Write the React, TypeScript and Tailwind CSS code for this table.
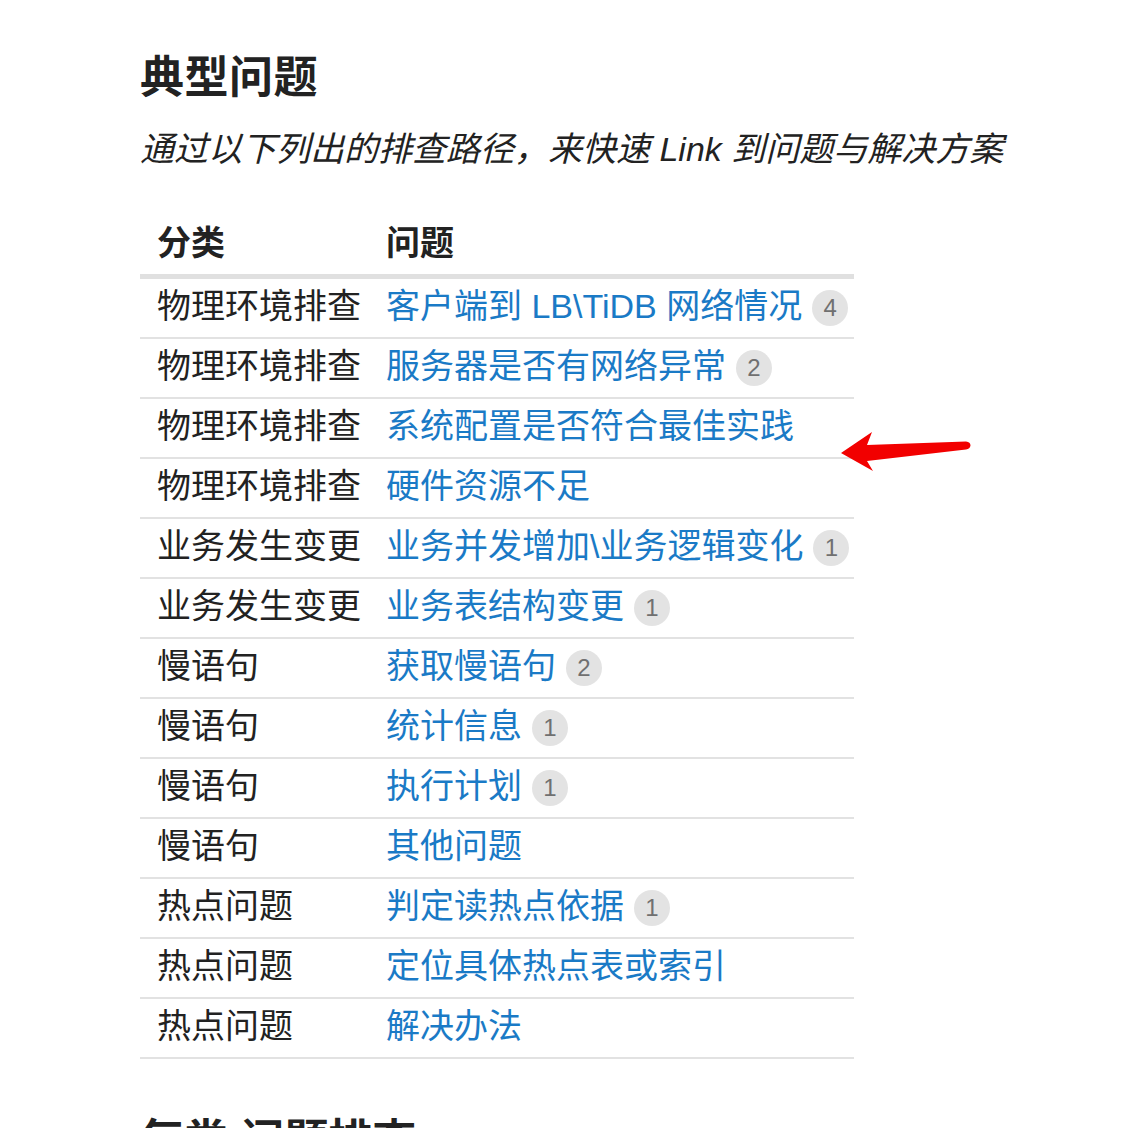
import React from "react";

type Row = { cat: string; q: string; n?: number };

const rows: Row[] = [
  { cat: "物理环境排查", q: "客户端到 LB\\TiDB 网络情况", n: 4 },
  { cat: "物理环境排查", q: "服务器是否有网络异常", n: 2 },
  { cat: "物理环境排查", q: "系统配置是否符合最佳实践" },
  { cat: "物理环境排查", q: "硬件资源不足" },
  { cat: "业务发生变更", q: "业务并发增加\\业务逻辑变化", n: 1 },
  { cat: "业务发生变更", q: "业务表结构变更", n: 1 },
  { cat: "慢语句", q: "获取慢语句", n: 2 },
  { cat: "慢语句", q: "统计信息", n: 1 },
  { cat: "慢语句", q: "执行计划", n: 1 },
  { cat: "慢语句", q: "其他问题" },
  { cat: "热点问题", q: "判定读热点依据", n: 1 },
  { cat: "热点问题", q: "定位具体热点表或索引" },
  { cat: "热点问题", q: "解决办法" },
];

const font = {
  fontFamily: '"Liberation Sans", "Noto Sans CJK SC", sans-serif',
};

export default function App() {
  return (
    <div
      className="relative min-h-[1128px] w-full bg-white pl-[140px] pt-[52px] text-[#222]"
      style={font}
    >
      <h1 className="text-[44px] font-bold leading-[52px] tracking-[0.5px]">典型问题</h1>
      <p className="mt-[23px] text-[34px] italic leading-[44px] text-[#222]">
        通过以下列出的排查路径，来快速 Link 到问题与解决方案
      </p>

      <div className="mt-[45px] w-[714px]">
        <div className="flex h-[63px] items-center border-b-[5px] border-[#e0e0e0] pb-[3px] text-[34px] font-bold">
          <div className="w-[229px] pl-[17px]">分类</div>
          <div className="pl-[17px]">问题</div>
        </div>
        {rows.map((r, i) => (
          <div
            key={i}
            className="flex h-[60px] items-center border-b-2 border-[#e2e2e2] pb-[4px] text-[34px] leading-[44px]"
          >
            <div className="w-[229px] shrink-0 whitespace-nowrap pl-[17px]">{r.cat}</div>
            <div className="flex items-center whitespace-nowrap pl-[17px]">
              <span className="text-[#1a7ac6]">{r.q}</span>
              {r.n !== undefined && (
                <span className="ml-[10px] mt-[3px] flex h-[36px] w-[36px] items-center justify-center rounded-full bg-[#e3e3e3] text-[24px] leading-none text-[#707070]">
                  {r.n}
                </span>
              )}
            </div>
          </div>
        ))}
      </div>

      <h2 className="mt-[56px] text-[44px] font-bold leading-[52px]">每类 问题排查</h2>

      <svg
        className="absolute left-[836px] top-[426px]"
        width="140"
        height="50"
        viewBox="836 426 140 50"
      >
        <path
          d="M841 453 L872 432 L867 445 L966 441.5 Q970.5 442 970.5 445.5 Q970 449 966 449.5 L867 461 L873 471 Z"
          fill="#f20000"
        />
      </svg>
    </div>
  );
}
